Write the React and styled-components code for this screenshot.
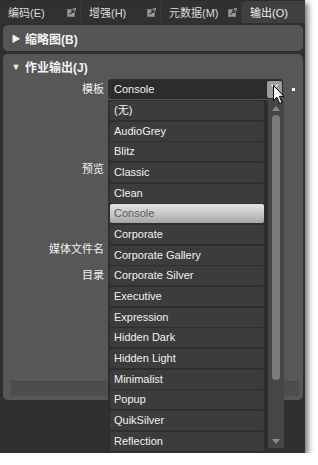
import React from "react";
import styled, { createGlobalStyle } from "styled-components";

const GlobalStyle = createGlobalStyle`
  html, body {
    margin: 0;
    padding: 0;
    background: #ffffff;
  }
  body {
    font-family: "Liberation Sans", "Noto Sans CJK SC", sans-serif;
  }
`;

const Frame = styled.div`
  position: relative;
  width: 305px;
  height: 453px;
  background: #2f2f2f;
  box-shadow: 3px 3px 6px rgba(0, 0, 0, 0.55);
  overflow: hidden;
  display: flex;
  flex-direction: column;
`;

/* 탭 줄 */
const TabBar = styled.div`
  display: flex;
  height: 23px;
  flex-shrink: 0;
  background: #2d2d2d;
`;

const Tab = styled.div`
  display: flex;
  align-items: center;
  justify-content: space-between;
  width: ${(p) => p.$width}px;
  padding: 0 4px 0 8px;
  box-sizing: border-box;
  font-size: 11px;
  color: ${(p) => (p.$active ? "#f0f0f0" : "#dcdcdc")};
  background: ${(p) => (p.$active ? "#404040" : "#313131")};
  border-radius: ${(p) => (p.$active ? "5px 0 0 0" : "0")};
  border-right: ${(p) => (p.$active ? "none" : "1px solid #3a3a3a")};
  margin-top: 1px;
`;

const Body = styled.div`
  display: flex;
  flex-direction: column;
  gap: 3px;
  padding: 2px 2px 0 3px;
`;

const Panel = styled.div`
  background: ${(p) => p.$bg || "#565656"};
  border-radius: 5px;
  display: flex;
  flex-direction: column;
  height: ${(p) => p.$height}px;
  box-sizing: border-box;
`;

const PanelTitle = styled.div`
  display: flex;
  align-items: center;
  gap: 4px;
  height: ${(p) => p.$height}px;
  padding-left: 8px;
  font-size: 12px;
  font-weight: bold;
  color: #f4f4f4;
  flex-shrink: 0;
`;

const Caret = styled.span`
  font-size: 9px;
  width: 10px;
  display: inline-block;
  text-align: center;
`;

const Form = styled.div`
  display: flex;
  flex-direction: column;
  flex: 1;
`;

const Row = styled.div`
  display: flex;
  align-items: flex-start;
  height: ${(p) => p.$height}px;
  flex-shrink: 0;
`;

const Label = styled.div`
  width: 101px;
  text-align: right;
  font-size: 11px;
  color: #f2f2f2;
  line-height: 20px;
  flex-shrink: 0;
`;

const ComboWrap = styled.div`
  position: relative;
  margin-left: 4px;
  display: flex;
  align-items: center;
  gap: 9px;
`;

const Combo = styled.div`
  width: 175px;
  height: 20px;
  box-sizing: border-box;
  background: #2c2c2c;
  border-radius: 3px;
  display: flex;
  align-items: center;
  justify-content: space-between;
  padding: 0 1px 0 6px;
  font-size: 11px;
  color: #f2f2f2;
`;

const ComboButton = styled.div`
  width: 15px;
  height: 17px;
  background: #9c9c9c;
  border-radius: 2px;
  display: flex;
  align-items: flex-start;
  justify-content: center;
  padding-top: 3px;
  box-sizing: border-box;
`;

const Dot = styled.div`
  width: 3px;
  height: 3px;
  background: #ffffff;
`;

/* 드롭다운 목록 */
const DropList = styled.div`
  position: absolute;
  top: 21px;
  left: 0;
  width: 176px;
  height: 348px;
  background: #2e2e2e;
  display: flex;
  z-index: 5;
`;

const Items = styled.div`
  display: flex;
  flex-direction: column;
  gap: 1.67px;
  padding: 1px 2px 0 2px;
  width: 160px;
  box-sizing: border-box;
`;

const Item = styled.div`
  height: 19px;
  flex-shrink: 0;
  box-sizing: border-box;
  padding-left: 4px;
  font-size: 11px;
  line-height: 19px;
  border-radius: 2px;
  color: ${(p) => (p.$selected ? "#5a5a5a" : "#f2f2f2")};
  background: ${(p) =>
    p.$selected
      ? "linear-gradient(to bottom, #e4e4e4 0%, #c8c8c8 50%, #a6a6a6 100%)"
      : "#3c3c3c"};
`;

const ScrollTrack = styled.div`
  width: 16px;
  margin-left: 2px;
  background: #464646;
  display: flex;
  flex-direction: column;
  align-items: center;
  padding: 6px 0 4px;
  box-sizing: border-box;
`;

const Thumb = styled.div`
  width: 8px;
  height: 265px;
  margin-top: 4px;
  border-radius: 4px;
  background: #7b7b7b;
`;

const Spacer = styled.div`
  flex: 1;
`;

const BottomBar = styled.div`
  margin: 0 4px 4px 8px;
  height: 14px;
  background: #4d4d4d;
  border-top: 1px solid #464646;
`;

const Cursor = styled.svg`
  position: absolute;
  left: 273px;
  top: 85px;
  z-index: 10;
`;

const PopIcon = () => (
  <svg width="9" height="9" viewBox="0 0 9 9">
    <rect x="0.5" y="1.5" width="7" height="7" fill="#9a9a9a" stroke="#7c7c7c" />
    <path d="M2.5 6.5 L6.5 2.5 M4 2.5 H6.5 V5" stroke="#3a3a3a" strokeWidth="1.2" fill="none" />
    <path d="M6 0 H9 V3" stroke="#bdbdbd" strokeWidth="1" fill="none" />
  </svg>
);

const Arrow = ({ dir }) => (
  <svg width="8" height="5" viewBox="0 0 8 5">
    {dir === "up" ? (
      <path d="M0 5 L4 0 L8 5 Z" fill="#8a8a8a" />
    ) : (
      <path d="M0 0 L4 5 L8 0 Z" fill="#8a8a8a" />
    )}
  </svg>
);

const templates = [
  "(无)",
  "AudioGrey",
  "Blitz",
  "Classic",
  "Clean",
  "Console",
  "Corporate",
  "Corporate Gallery",
  "Corporate Silver",
  "Executive",
  "Expression",
  "Hidden Dark",
  "Hidden Light",
  "Minimalist",
  "Popup",
  "QuikSilver",
  "Reflection",
];

const tabs = [
  { label: "编码(E)", width: 81, icon: true },
  { label: "增强(H)", width: 80, icon: true },
  { label: "元数据(M)", width: 81, icon: true },
  { label: "输出(O)", width: 63, active: true },
];

const App = () => {
  return (
    <>
      <GlobalStyle />
      <Frame>
        <TabBar>
          {tabs.map((t) => (
            <Tab key={t.label} $width={t.width} $active={t.active}>
              <span>{t.label}</span>
              {t.icon && <PopIcon />}
            </Tab>
          ))}
        </TabBar>
        <Body>
          <Panel $height={26} $bg="#555555">
            <PanelTitle $height={26}>
              <Caret>▶</Caret>
              <span>缩略图(B)</span>
            </PanelTitle>
          </Panel>
          <Panel $height={346} $bg="#575757">
            <PanelTitle $height={25}>
              <Caret>▼</Caret>
              <span>作业输出(J)</span>
            </PanelTitle>
            <Form>
              <Row $height={80}>
                <Label>模板</Label>
                <ComboWrap>
                  <Combo>
                    <span>Console</span>
                    <ComboButton>
                      <svg width="7" height="5" viewBox="0 0 7 5">
                        <path d="M0.5 0.5 L3.5 4 L6.5 0.5" stroke="#ffffff" strokeWidth="1.2" fill="none" />
                      </svg>
                    </ComboButton>
                  </Combo>
                  <Dot />
                  <DropList>
                    <Items>
                      {templates.map((name) => (
                        <Item key={name} $selected={name === "Console"}>
                          {name}
                        </Item>
                      ))}
                    </Items>
                    <ScrollTrack>
                      <Arrow dir="up" />
                      <Thumb />
                      <Spacer />
                      <Arrow dir="down" />
                    </ScrollTrack>
                  </DropList>
                </ComboWrap>
              </Row>
              <Row $height={80}>
                <Label>预览</Label>
              </Row>
              <Row $height={26}>
                <Label>媒体文件名</Label>
              </Row>
              <Row $height={26}>
                <Label>目录</Label>
              </Row>
            </Form>
            <Spacer />
            <BottomBar />
          </Panel>
        </Body>
        <Cursor width="13" height="20" viewBox="0 0 13 20">
          <path
            d="M0.5 0.5 L0.5 15.5 L4 12.2 L6.6 18.5 L9 17.5 L6.4 11.3 L11 11.3 Z"
            fill="#ffffff"
            stroke="#000000"
            strokeWidth="1"
          />
        </Cursor>
      </Frame>
    </>
  );
};

export default App;
